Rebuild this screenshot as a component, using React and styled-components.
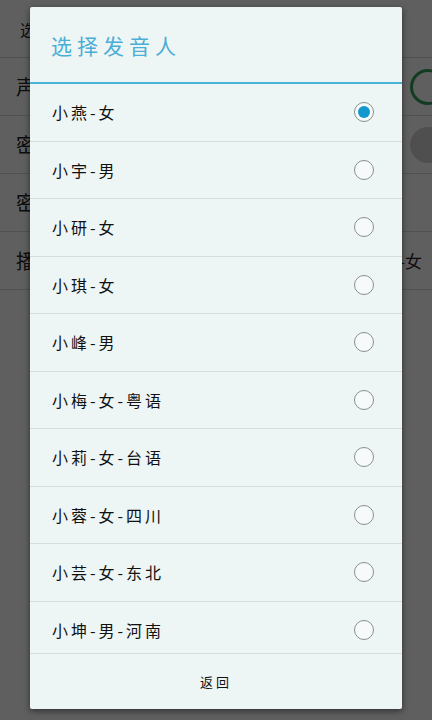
import React, { useState } from 'react';
import styled, { createGlobalStyle } from 'styled-components';

const GlobalStyle = createGlobalStyle`
  html, body {
    margin: 0;
    padding: 0;
    width: 432px;
    height: 720px;
    overflow: hidden;
  }
  body {
    font-family: "Noto Sans CJK SC", "Noto Sans", sans-serif;
  }
`;

const voices = [
  '小燕-女',
  '小宇-男',
  '小研-女',
  '小琪-女',
  '小峰-男',
  '小梅-女-粤语',
  '小莉-女-台语',
  '小蓉-女-四川',
  '小芸-女-东北',
  '小坤-男-河南',
];

const Screen = styled.div`
  position: relative;
  width: 432px;
  height: 720px;
  background: #fafafa;
  overflow: hidden;
`;

const TopBar = styled.div`
  height: 57px;
  display: flex;
  align-items: center;
  padding-left: 20px;
  font-size: 16px;
  color: #222;
  border-bottom: 1px solid #ccc;
`;

const SettingRow = styled.div`
  height: 57px;
  display: flex;
  align-items: center;
  justify-content: space-between;
  padding: 0 0 0 16px;
  font-size: 20px;
  color: #222;
  border-bottom: 1px solid #d6d6d6;
`;

const Ring = styled.div`
  width: 30px;
  height: 30px;
  margin-right: -14px;
  border-radius: 50%;
  border: 3px solid ${p => (p.$on ? '#2f9e5a' : '#d0d0d0')};
  background: ${p => (p.$on ? 'transparent' : '#d0d0d0')};
`;

const SideText = styled.span`
  margin-right: 10px;
  font-size: 17px;
`;

const Dim = styled.div`
  position: absolute;
  inset: 0;
  background: rgba(0, 0, 0, 0.62);
`;

const Dialog = styled.div`
  position: absolute;
  left: 30px;
  top: 7px;
  width: 372px;
  height: 702px;
  background: #eef5f5;
  border-radius: 2px;
  box-shadow: 0 2px 6px rgba(0, 0, 0, 0.5);
  display: flex;
  flex-direction: column;
`;

const Title = styled.div`
  height: 75px;
  flex-shrink: 0;
  display: flex;
  align-items: center;
  padding-left: 21px;
  font-size: 21px;
  letter-spacing: 5px;
  color: #4aaed6;
  border-bottom: 2px solid #4ab3d8;
`;

const List = styled.div`
  height: 569px;
  flex-shrink: 0;
  overflow: hidden;
  display: flex;
  flex-direction: column;
`;

const Row = styled.div`
  height: 56.5px;
  flex-shrink: 0;
  display: flex;
  align-items: center;
  justify-content: space-between;
  padding: 0 28px 0 22px;
  border-bottom: 1px solid #d6dcdc;
  font-size: 16px;
  letter-spacing: 3px;
  color: #111;
  cursor: pointer;
`;

const Radio = styled.span`
  width: 18px;
  height: 18px;
  border-radius: 50%;
  border: 1.5px solid #8a8f8f;
  box-sizing: content-box;
  display: flex;
  align-items: center;
  justify-content: center;
  background: #f6fafa;

  &::after {
    content: '';
    width: 12px;
    height: 12px;
    border-radius: 50%;
    background: #1497cf;
    display: ${p => (p.$checked ? 'block' : 'none')};
  }
`;

const Footer = styled.div`
  flex: 1;
  display: flex;
  align-items: center;
  justify-content: center;
  border-top: 1px solid #d6dcdc;
  font-size: 13px;
  letter-spacing: 3px;
  color: #111;
`;

export default function App() {
  const [picked, setPicked] = useState(0);

  return (
    <>
      <GlobalStyle />
      <Screen>
        <TopBar>选择</TopBar>
        <SettingRow>声音<Ring $on /></SettingRow>
        <SettingRow>密码<Ring /></SettingRow>
        <SettingRow>密码</SettingRow>
        <SettingRow>播音员<SideText>小燕-女</SideText></SettingRow>
        <Dim />
        <Dialog>
          <Title>选择发音人</Title>
          <List>
            {voices.map((v, i) => (
              <Row key={v} onClick={() => setPicked(i)}>
                {v}
                <Radio $checked={picked === i} />
              </Row>
            ))}
          </List>
          <Footer>返回</Footer>
        </Dialog>
      </Screen>
    </>
  );
}
